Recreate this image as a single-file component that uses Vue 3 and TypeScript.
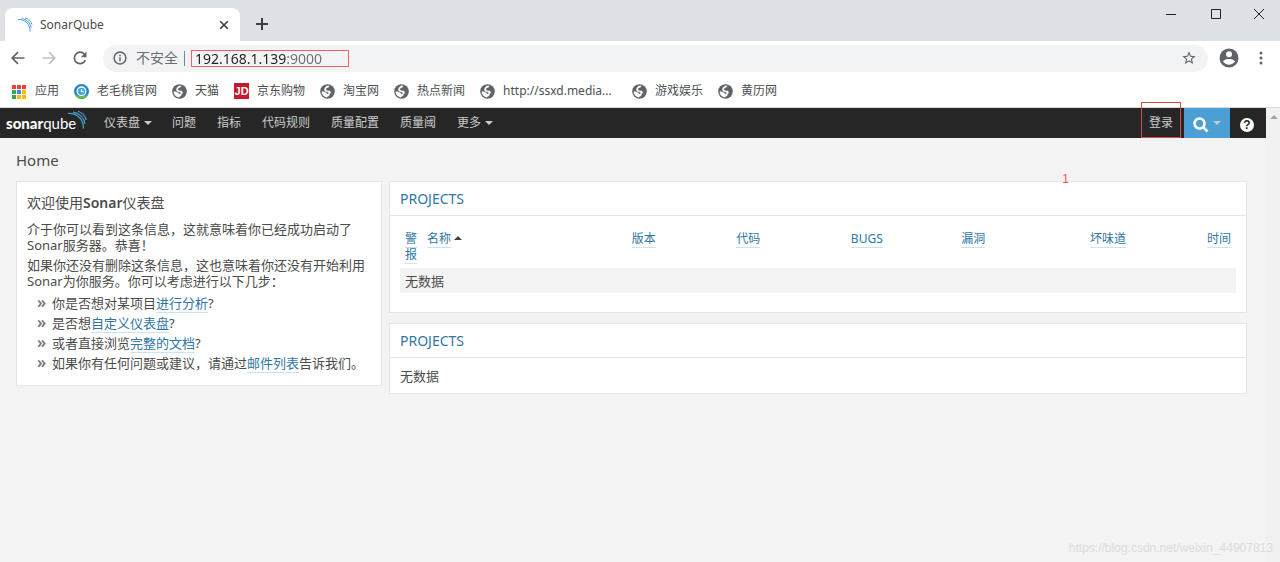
<script setup lang="ts">
import { ref } from 'vue'

interface Bookmark {
  icon: 'peach' | 'globe' | 'jd'
  label: string
  wide?: boolean
}

const address = ref('192.168.1.139:9000')

const bookmarks: Bookmark[] = [
  { icon: 'peach', label: '老毛桃官网' },
  { icon: 'globe', label: '天猫' },
  { icon: 'jd', label: '京东购物' },
  { icon: 'globe', label: '淘宝网' },
  { icon: 'globe', label: '热点新闻' },
  { icon: 'globe', label: 'http://ssxd.media...', wide: true },
  { icon: 'globe', label: '游戏娱乐' },
  { icon: 'globe', label: '黄历网' },
]

const navLinks: string[] = ['问题', '指标', '代码规则', '质量配置', '质量阈']

const columns: { key: string; label: string }[] = [
  { key: 'alert', label: '警报' },
  { key: 'name', label: '名称' },
  { key: 'version', label: '版本' },
  { key: 'code', label: '代码' },
  { key: 'bugs', label: 'BUGS' },
  { key: 'vulns', label: '漏洞' },
  { key: 'smells', label: '坏味道' },
  { key: 'time', label: '时间' },
]

const steps: { before: string; link: string; after: string }[] = [
  { before: '你是否想对某项目', link: '进行分析', after: '?' },
  { before: '是否想', link: '自定义仪表盘', after: '?' },
  { before: '或者直接浏览', link: '完整的文档', after: '?' },
  { before: '如果你有任何问题或建议，请通过', link: '邮件列表', after: '告诉我们。' },
]

const appColors: string[] = [
  '#ea4335', '#ea4335', '#ea4335',
  '#34a853', '#4285f4', '#fbbc05',
  '#34a853', '#fbbc05', '#fbbc05',
]
</script>

<template>
  <div class="window">
    <header class="tabstrip">
      <div class="tab">
        <svg class="favicon" viewBox="0 0 16 16" aria-hidden="true">
          <path d="M1 2.5C8 2 13 7 13.200 14.500M4.500 1.500C10 2.500 13.500 6 14.200 11M8 1C11.500 2.200 14 4.500 15 7.500" />
        </svg>
        <span class="tab-title">SonarQube</span>
        <button class="tab-close" type="button" aria-label="Close tab">
          <svg viewBox="0 0 10 10"><path d="M1.200 1.200l7.600 7.600M8.800 1.200l-7.600 7.600" /></svg>
        </button>
      </div>
      <button class="tab-new" type="button" aria-label="New tab">
        <svg viewBox="0 0 12 12"><path d="M6 0v12M0 6h12" /></svg>
      </button>
      <div class="window-controls">
        <button type="button" aria-label="Minimize">
          <svg viewBox="0 0 12 12"><path d="M1 6.500h10" /></svg>
        </button>
        <button type="button" aria-label="Maximize">
          <svg viewBox="0 0 12 12"><path d="M1.500 1.500h9v9h-9z" /></svg>
        </button>
        <button type="button" aria-label="Close">
          <svg viewBox="0 0 12 12"><path d="M1 1l10 10M11 1L1 11" /></svg>
        </button>
      </div>
    </header>

    <div class="toolbar">
      <button class="tool" type="button" aria-label="Back">
        <svg viewBox="0 0 16 16"><path d="M14.500 8H2.500M8 2.200L2.200 8 8 13.800" /></svg>
      </button>
      <button class="tool tool-off" type="button" aria-label="Forward">
        <svg viewBox="0 0 16 16"><path d="M1.500 8h12M8 2.200L13.800 8 8 13.800" /></svg>
      </button>
      <button class="tool" type="button" aria-label="Reload">
        <svg viewBox="0 0 16 16">
          <path d="M13.300 10.200A5.700 5.700 0 1 1 12.400 4.200" />
          <path class="solid" d="M14.500 1.500v5.700H8.800z" />
        </svg>
      </button>
      <div class="omnibox">
        <svg class="info" viewBox="0 0 14 14" aria-hidden="true">
          <circle cx="7" cy="7" r="5.900" />
          <path d="M7 6.200v4M7 3.700v1.500" />
        </svg>
        <label class="security" for="address">不安全</label>
        <span class="divider"></span>
        <span class="address-mark">
          <input id="address" v-model="address" class="address" type="text" spellcheck="false" />
        </span>
        <button class="star" type="button" aria-label="Bookmark this page">
          <svg viewBox="0 0 24 24">
            <path d="M22 9.240l-7.190-.620L12 2 9.190 8.630 2 9.240l5.460 4.730L5.820 21 12 17.270 18.180 21l-1.630-7.030L22 9.240zM12 15.400l-3.760 2.270 1-4.280-3.320-2.880 4.380-.380L12 6.100l1.710 4.040 4.380.380-3.320 2.880 1 4.280L12 15.400z" />
          </svg>
        </button>
      </div>
      <button class="profile" type="button" aria-label="Profile">
        <svg viewBox="0 0 20 20">
          <circle cx="10" cy="10" r="9.500" fill="#5f6368" />
          <circle cx="10" cy="6.300" r="3" fill="#fff" />
          <path d="M4 13.500C5.200 11.600 8 11 10 11s4.800.600 6 2.500A7.200 7.200 0 0 1 4 13.500z" fill="#fff" />
        </svg>
      </button>
      <button class="kebab" type="button" aria-label="Menu">
        <svg viewBox="0 0 4 14">
          <circle cx="2" cy="2" r="1.500" /><circle cx="2" cy="7" r="1.500" /><circle cx="2" cy="12" r="1.500" />
        </svg>
      </button>
    </div>

    <nav class="bookmarks" aria-label="Bookmarks">
      <a class="bookmark" href="#">
        <svg class="bookmark-icon" viewBox="0 0 15 15" aria-hidden="true">
          <rect
            v-for="(color, i) in appColors" :key="i"
            :x="(i % 3) * 5" :y="1 + Math.floor(i / 3) * 5" width="4" height="4" :fill="color"
          />
        </svg>
        <span>应用</span>
      </a>
      <a v-for="mark in bookmarks" :key="mark.label" class="bookmark" href="#">
        <svg v-if="mark.icon === 'globe'" class="bookmark-icon" viewBox="0 0 16 16" aria-hidden="true">
          <circle cx="8" cy="8" r="7.800" fill="#5f6368" />
          <path d="M9.800 2C9.500 3.400 8 3.600 7 4.200 5.600 5.100 6 6.800 7.600 7.100c1.600.300 3.200.200 3.600 1.300.400 1.400-.900 1.800-1.200 2.800-.300 1.200-1 2-2 2.200L7.200 14A6.200 6.200 0 0 1 2 8.200c1.500-.100 3 .200 4 1 .800.700 1.400.800 1.700 1.700h1.200c.200-.900.700-1.100.500-1.700-.400-.900-3.300-.300-4.300-1.900C4.200 5.500 5.300 3.300 7.300 2z" fill="#fff" stroke="#fff" stroke-width=".500" />
        </svg>
        <svg v-else-if="mark.icon === 'peach'" class="bookmark-icon" viewBox="0 0 16 16" aria-hidden="true">
          <circle cx="8" cy="8" r="8" fill="#2484c6" />
          <path d="M.500 10.500a8 8 0 0 0 15 0C12 14 4 14 .500 10.500z" fill="#6dbb45" />
          <circle cx="8" cy="7.800" r="4.600" fill="#3da5dc" stroke="#fff" stroke-width="1.400" />
          <path d="M8 5.200v3h2.600" fill="none" stroke="#fff" stroke-width="1.200" />
        </svg>
        <span v-else class="jd">JD</span>
        <span :class="{ wide: mark.wide }">{{ mark.label }}</span>
      </a>
    </nav>

    <div class="viewport">
      <div class="page">
        <nav class="navbar" aria-label="Main">
          <a class="logo" href="#">
            <b>sonar</b><span>qube</span>
            <svg viewBox="0 0 20 20" aria-hidden="true">
              <path d="M1 3.500C10 3 16.500 9 16.500 18.500M6 2.200C12.500 3 17.200 8 18 14M11 1.200C15 2.500 18 5.500 19.400 10" />
            </svg>
          </a>
          <button class="nav-item" type="button">仪表盘<i class="caret"></i></button>
          <a v-for="link in navLinks" :key="link" class="nav-item" href="#">{{ link }}</a>
          <button class="nav-item" type="button">更多<i class="caret"></i></button>
          <a class="nav-item login" href="#">登录</a>
          <button class="search" type="button" aria-label="Search">
            <svg viewBox="0 0 16 16"><circle cx="6.500" cy="6.500" r="5" /><path d="M10.200 10.200l4.300 4.300" /></svg>
            <i class="caret"></i>
          </button>
          <button class="help" type="button" aria-label="Help"><span>?</span></button>
        </nav>

        <main class="content">
          <h1>Home</h1>
          <div class="dashboard">
            <section class="card welcome">
              <h2>欢迎使用<b>Sonar</b>仪表盘</h2>
              <p>介于你可以看到这条信息，这就意味着你已经成功启动了Sonar服务器。恭喜！</p>
              <p>如果你还没有删除这条信息，这也意味着你还没有开始利用Sonar为你服务。你可以考虑进行以下几步：</p>
              <ul>
                <li v-for="step in steps" :key="step.link">
                  {{ step.before }}<a href="#">{{ step.link }}</a>{{ step.after }}
                </li>
              </ul>
            </section>

            <div class="column">
              <section class="card">
                <h3><a href="#">PROJECTS</a></h3>
                <div class="card-body table-body">
                  <table>
                    <colgroup>
                      <col v-for="col in columns" :key="col.key" :class="'col-' + col.key" />
                    </colgroup>
                    <thead>
                      <tr>
                        <th v-for="col in columns" :key="col.key" scope="col">
                          <a href="#">{{ col.label }}</a><i v-if="col.key === 'name'" class="caret caret-up"></i>
                        </th>
                      </tr>
                    </thead>
                    <tbody>
                      <tr><td :colspan="columns.length">无数据</td></tr>
                    </tbody>
                  </table>
                </div>
              </section>

              <section class="card">
                <h3><a href="#">PROJECTS</a></h3>
                <div class="card-body">无数据</div>
              </section>
            </div>
          </div>
        </main>
      </div>
      <div class="scrollbar"><i class="scroll-up"></i></div>
      <span class="note">1</span>
      <span class="watermark">https://blog.csdn.net/weixin_44907813</span>
    </div>
  </div>
</template>

<style>
body {
  margin: 0;
}
</style>

<style scoped>
.window {
  display: flex;
  flex-direction: column;
  min-height: 100vh;
  background: #fff;
  color: #4b4b4b;
  font: 13px/16px "Noto Sans", "Noto Sans CJK SC", sans-serif;
}
.window *,
.window *::before {
  box-sizing: border-box;
}
button {
  display: flex;
  align-items: center;
  justify-content: center;
  padding: 0;
  border: 0;
  background: none;
  color: inherit;
  font: inherit;
}
a {
  color: #2f76a5;
  text-decoration: none;
}
svg {
  display: block;
  flex: none;
  fill: none;
}

/* Tab strip */
.tabstrip {
  display: flex;
  height: 41px;
  padding-left: 5px;
  background: #dee1e6;
}
.tab {
  display: flex;
  align-items: center;
  width: 235px;
  height: 33px;
  margin-top: 8px;
  padding: 0 10px 0 12px;
  border-radius: 8px 8px 0 0;
  background: #fff;
}
.favicon {
  width: 16px;
  height: 16px;
  stroke: #4b9fd5;
}
.tab-title {
  flex: 1;
  margin-left: 7px;
  font-size: 12px;
}
.tab-close svg {
  width: 10px;
  height: 10px;
  stroke: #3c4043;
  stroke-width: 1.600;
}
.tab-close {
  width: 12px;
}
.tab-new {
  width: 12px;
  margin: 7px 0 0 16px;
}
.tab-new svg {
  width: 12px;
  height: 12px;
  stroke: #3c4043;
  stroke-width: 2;
}
.window-controls {
  display: flex;
  height: 28px;
  margin-left: auto;
}
.window-controls button {
  width: 45px;
}
.window-controls button:last-child {
  width: 42px;
}
.window-controls svg {
  width: 12px;
  height: 12px;
  stroke: #222;
}

/* Address row */
.toolbar {
  display: flex;
  align-items: center;
  height: 34px;
  padding: 0 17px 0 10px;
}
.tool {
  width: 16px;
  margin-right: 15px;
}
.tool svg {
  width: 16px;
  height: 16px;
  stroke: #5f6368;
  stroke-width: 1.700;
}
.tool-off svg {
  stroke: #bdc1c6;
}
.tool .solid {
  fill: #5f6368;
  stroke: none;
}
.omnibox {
  display: flex;
  flex: 1;
  align-items: center;
  height: 27px;
  padding: 0 11px 0 10px;
  border-radius: 14px;
  background: #f1f3f4;
}
.info {
  width: 14px;
  height: 14px;
  stroke: #5f6368;
  stroke-width: 1.500;
}
.security {
  margin-left: 9px;
  color: #6b6f73;
  font-size: 14px;
}
.divider {
  width: 1px;
  height: 15px;
  margin: 0 6px;
  background: #80868b;
}
.address-mark {
  display: flex;
  width: 158px;
  border: 1px solid #f06060;
}
.address {
  width: 100%;
  height: 15px;
  padding: 0 0 0 3px;
  border: 0;
  outline: 0;
  background: linear-gradient(90deg, #202124 94px, #6b6f73 94px) text;
  color: #202124;
  font: 14px/15px "Noto Sans", sans-serif;
  -webkit-text-fill-color: transparent;
}
.star {
  margin-left: auto;
}
.star svg {
  width: 16px;
  height: 16px;
  fill: #5f6368;
}
.profile {
  margin-left: 11px;
}
.profile svg {
  width: 20px;
  height: 20px;
}
.kebab {
  margin-left: 20px;
}
.kebab svg {
  width: 4px;
  height: 14px;
  fill: #5f6368;
}

/* Bookmarks row */
.bookmarks {
  display: flex;
  align-items: center;
  gap: 15px;
  height: 33px;
  padding-left: 12px;
  border-bottom: 1px solid #d5d7d9;
}
.bookmark {
  display: flex;
  align-items: center;
  gap: 8px;
  color: #4b4f52;
  font-size: 12px;
  white-space: nowrap;
}
.bookmark-icon {
  width: 15px;
  height: 15px;
}
.wide {
  min-width: 114px;
}
.jd {
  width: 15px;
  height: 16px;
  background: #c9182b;
  color: #fff;
  font: bold 11px/16px "Liberation Sans", sans-serif;
  text-align: center;
}

/* Page */
.viewport {
  position: relative;
  display: flex;
  flex: 1;
}
.page {
  flex: 1;
  min-width: 0;
  background: #f3f3f3;
}
.scrollbar {
  width: 14px;
  background: #f1f1f1;
}
.scroll-up {
  display: block;
  width: 8px;
  margin: 7px auto 0 4px;
  border: 4px solid transparent;
  border-top: 0;
  border-bottom-color: #a3a3a3;
}
.navbar {
  display: flex;
  height: 30px;
  background: #262626;
}
.logo {
  display: flex;
  width: 88px;
  margin-right: 6px;
  padding: 0 0 0 6px;
  color: #fff;
  font: 15px/30px Lato, sans-serif;
}
.logo b {
  font-weight: 900;
}
.logo svg {
  width: 20px;
  height: 20px;
  margin: 2px 0 0 -9px;
  stroke: #4b9fd5;
  stroke-width: 1.200;
}
.nav-item {
  display: flex;
  align-items: center;
  height: 30px;
  padding: 0 10px;
  margin-right: 1px;
  color: #ccc;
  font-size: 12px;
}
button.nav-item {
  margin-right: 0;
}
.caret {
  display: inline-block;
  width: 8px;
  margin-left: 4px;
  border: 4px solid transparent;
  border-top-color: currentColor;
  border-bottom: 0;
}
.caret-up {
  border-top: 0;
  border-bottom: 4px solid #444;
  margin: 0 0 3px 3px;
}
.login {
  position: relative;
  margin: 0 3px 0 auto;
  padding: 0 8px;
}
.login::before {
  position: absolute;
  inset: -6px 0 0 0;
  border: 1px solid #d84848;
  content: "";
}
.search {
  width: 46px;
  background: #4b9fd5;
  color: #bfc9d0;
}
.search svg {
  width: 16px;
  height: 16px;
  margin-top: 4px;
  stroke: #fff;
  stroke-width: 2.600;
}
.help {
  width: 36px;
  padding-right: 2px;
}
.help span {
  width: 14px;
  height: 14px;
  margin-top: 4px;
  border-radius: 50%;
  background: #fff;
  color: #262626;
  font: bold 12px/14px "Liberation Sans", sans-serif;
}
.content {
  padding: 14px 19px 16px 16px;
}
h1 {
  margin: 0 0 13px;
  font-size: 15px;
  font-weight: 400;
  line-height: 16px;
}
.dashboard {
  display: grid;
  grid-template-columns: 61fr 143fr;
  align-items: start;
  gap: 7px;
}
.column {
  display: grid;
  gap: 10px;
}
.card {
  border: 1px solid #e6e6e6;
  background: #fff;
}
.welcome {
  padding: 13px 10px 12px;
}
h2 {
  margin: 0 0 10px;
  font-size: 14px;
  font-weight: 400;
  line-height: 16px;
}
h2 b {
  font-weight: 600;
}
p {
  margin: 0 0 4px;
}
ul {
  margin: 0;
  padding: 0;
  list-style: none;
}
li {
  padding-left: 25px;
  line-height: 20px;
}
li::before {
  display: inline-block;
  width: 15px;
  margin-left: -15px;
  color: #777;
  font-size: 16px;
  font-weight: 600;
  line-height: 16px;
  content: "»";
}
li a,
th a {
  border-bottom: 1px solid #cae3f2;
}
h3 {
  margin: 0;
  padding: 9px 10px 8px;
  border-bottom: 1px solid #e6e6e6;
  font-size: 14px;
  font-weight: 400;
  line-height: 16px;
}
.card-body {
  padding: 10px 10px 9px;
}
.table-body {
  padding: 10px 10px 19px;
}
table {
  width: 100%;
  border-collapse: collapse;
  table-layout: fixed;
}
.col-alert { width: 22px; }
.col-name { width: 24.500%; }
.col-version { width: 12.500%; }
.col-code { width: 13.700%; }
.col-bugs { width: 13.200%; }
.col-vulns { width: 15.400%; }
.col-smells { width: 14%; }
th {
  padding: 5px;
  font-size: 12px;
  font-weight: 400;
  text-align: left;
  vertical-align: top;
}
td {
  padding: 5px 5px 4px;
  background: #f3f3f3;
}

/* Marks lying over the page */
.note {
  position: absolute;
  top: 64px;
  right: 211px;
  color: #f55;
  font: 12px/14px "Liberation Sans", sans-serif;
}
.watermark {
  position: absolute;
  right: 7px;
  bottom: 6px;
  color: #dcdcdc;
  font: 12px/16px "Liberation Sans", sans-serif;
}
</style>
